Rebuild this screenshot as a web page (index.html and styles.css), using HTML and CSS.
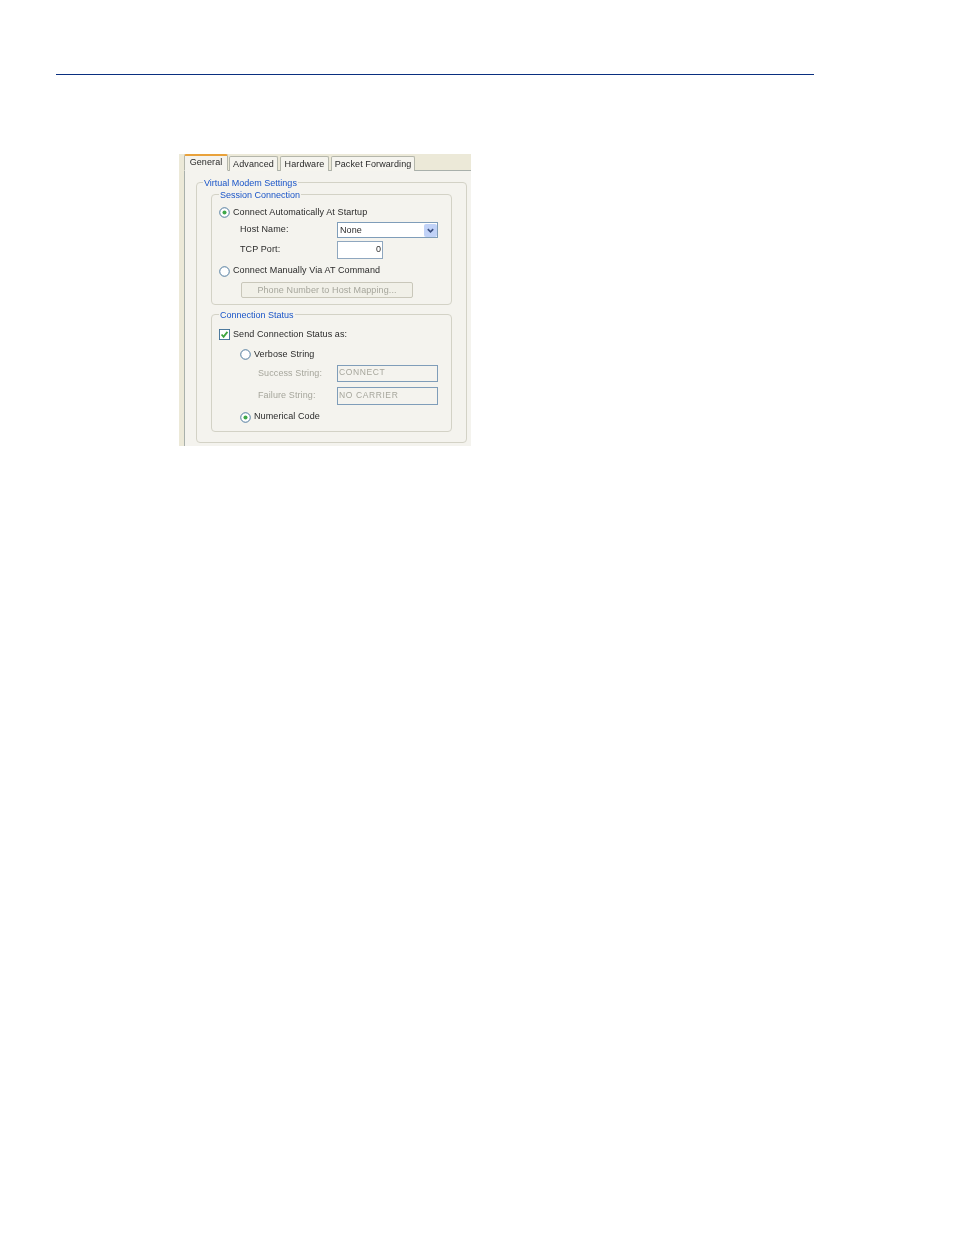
FILE: index.html
```html
<!DOCTYPE html>
<html lang="en">
<head>
  <meta charset="UTF-8">
  <title>Virtual Modem Settings</title>
  <link rel="stylesheet" href="styles.css">
</head>
<body>
  <div class="rule"></div>

  <div class="dialog">
    <div class="tabs">
      <div class="tab active">General</div>
      <div class="tab t-advanced">Advanced</div>
      <div class="tab t-hardware">Hardware</div>
      <div class="tab t-packet">Packet Forwarding</div>
    </div>

    <div class="panel">
      <div class="group outer">
        <span class="legend">Virtual Modem Settings</span>

        <div class="group session">
          <span class="legend">Session Connection</span>

          <div class="row r-auto">
            <svg class="radio" viewBox="0 0 12 12"><circle cx="6" cy="6" r="5.2" fill="#fff" stroke="#3f6f96"/><circle cx="6" cy="6" r="2.2" fill="#3fa84a"/></svg>
            <span>Connect Automatically At Startup</span>
          </div>
          <div class="row field r-host">
            <span class="field-label">Host Name:</span>
            <div class="select">
              <span>None</span>
              <div class="arrow">
                <svg viewBox="0 0 10 10" width="9" height="9"><path d="M2 3.5 L5 6.5 L8 3.5" fill="none" stroke="#3b4f80" stroke-width="1.8"/></svg>
              </div>
            </div>
          </div>
          <div class="row field r-tcp">
            <span class="field-label">TCP Port:</span>
            <div class="input port">0</div>
          </div>
          <div class="row r-manual">
            <svg class="radio" viewBox="0 0 12 12"><circle cx="6" cy="6" r="5.2" fill="#fff" stroke="#3f6f96"/></svg>
            <span>Connect Manually Via AT Command</span>
          </div>
          <div class="map-button">Phone Number to Host Mapping...</div>
        </div>

        <div class="group status">
          <span class="legend">Connection Status</span>

          <div class="row r-send">
            <svg class="radio" viewBox="0 0 12 12"><rect x="0.5" y="0.5" width="11" height="11" fill="#fff" stroke="#3f6f96"/><path d="M2.8 6 L5 8.5 L9.2 3.2" fill="none" stroke="#3fa53f" stroke-width="2"/></svg>
            <span>Send Connection Status as:</span>
          </div>
          <div class="row sub r-verbose">
            <svg class="radio" viewBox="0 0 12 12"><circle cx="6" cy="6" r="5.2" fill="#fff" stroke="#3f6f96"/></svg>
            <span>Verbose String</span>
          </div>
          <div class="row field off r-success">
            <span class="field-label">Success String:</span>
            <div class="input wide">CONNECT</div>
          </div>
          <div class="row field off r-failure">
            <span class="field-label">Failure String:</span>
            <div class="input wide">NO CARRIER</div>
          </div>
          <div class="row sub r-numeric">
            <svg class="radio" viewBox="0 0 12 12"><circle cx="6" cy="6" r="5.2" fill="#fff" stroke="#3f6f96"/><circle cx="6" cy="6" r="2.2" fill="#3fa84a"/></svg>
            <span>Numerical Code</span>
          </div>
        </div>
      </div>
    </div>
  </div>
</body>
</html>
```

FILE: styles.css
```css
body {
  margin: 0;
  padding: 74px 0 0 56px;
  background: #fff;
  color: #2a2a2a;
  font-family: "Liberation Sans", Arial, sans-serif;
  font-size: 9px;
  letter-spacing: 0.1px;
}
.rule {
  width: 758px;
  height: 1px;
  background: #0a2f80;
}

.dialog {
  width: 292px;
  height: 292px;
  margin: 79px 0 0 123px;
  background: #ece9d8;
  display: flex;
  flex-direction: column;
  filter: blur(0.3px);
}

/* tabs */
.tabs {
  display: flex;
  align-items: flex-end;
  box-sizing: border-box;
  height: 17px;
  margin-left: 5px;
  border-bottom: 1px solid #a9b0ab;
}
.tab {
  height: 15px;
  margin-bottom: -1px;
  line-height: 15px;
  text-align: center;
  background: #f5f4ee;
  border: 1px solid #b4b6ab;
  border-bottom: none;
  border-radius: 2px 2px 0 0;
  box-sizing: border-box;
  margin-right: 2px;
}
.tab.active {
  width: 44px;
  height: 17px;
  margin-right: 1px;
  line-height: 13px;
  border-top: 2px solid #e9a23b;
  background: #f4f3ee;
  border-bottom: 1px solid #f4f3ee;
}
.t-advanced { width: 49px; }
.t-hardware { width: 49px; }
.t-packet { width: 84px; }

.panel {
  flex: 1;
  margin-left: 5px;
  padding: 11px 4px 0 11px;
  background: #f4f3ee;
  border-left: 1px solid #a9b0ab;
  box-sizing: border-box;
}

/* group boxes */
.group {
  position: relative;
  border: 1px solid #d3d2c6;
  border-radius: 4px;
  box-sizing: border-box;
}
.legend {
  position: absolute;
  top: -6px;
  padding: 0 1px;
  background: #f4f3ee;
  color: #1a55c8;
  line-height: 12px;
  letter-spacing: 0;
}
.outer {
  height: 261px;
  padding: 11px 14px 0 14px;
}
.outer > .legend { left: 6px; }
.session { height: 111px; padding-top: 9px; }
.status {
  height: 118px;
  margin-top: 9px;
  padding-top: 11px;
}
.session > .legend, .status > .legend { left: 7px; }

/* rows */
.row {
  display: flex;
  align-items: center;
  height: 16px;
  padding-left: 7px;
}
.row > span { position: relative; top: -1px; }
.r-auto > span, .r-send > span, .r-verbose > span { top: 0; }
.radio {
  width: 11px;
  height: 11px;
  margin-right: 3px;
  flex: none;
}
.sub { padding-left: 28px; }
.field { padding-left: 28px; }
.field-label { width: 97px; flex: none; }
.r-host { margin-top: 2px; }
.r-tcp { margin-top: 3px; height: 18px; }
.r-manual { margin-top: 4px; }
.r-verbose { margin-top: 4px; }
.r-success { margin-top: 3px; height: 17px; padding-left: 46px; }
.r-failure { margin-top: 5px; height: 18px; padding-left: 46px; }
.r-numeric { margin-top: 4px; }
.off { color: #a6a69c; }
.off .field-label { width: 79px; }

/* controls */
.select, .input {
  box-sizing: border-box;
  height: 100%;
  background: #fff;
  border: 1px solid #7f9db9;
}
.select {
  width: 101px;
  display: flex;
  justify-content: space-between;
  align-items: center;
  padding-left: 2px;
}
.arrow {
  width: 13px;
  height: 13px;
  display: flex;
  align-items: center;
  justify-content: center;
  background: #c1d2f7;
  border-radius: 2px;
}
.input {
  display: flex;
  align-items: center;
  padding-bottom: 2px;
}
.port {
  width: 46px;
  justify-content: flex-end;
  padding-right: 1px;
  border-color: #8fa7bf;
}
.wide {
  width: 101px;
  padding-left: 1px;
  padding-bottom: 3px;
  background: #f4f3ee;
  letter-spacing: 0.6px;
  font-size: 8.5px;
}
.map-button {
  width: 172px;
  height: 16px;
  margin: 3px 0 0 29px;
  line-height: 14px;
  text-align: center;
  color: #a6a69c;
  background: #f1f0e8;
  border: 1px solid #c9c7ba;
  border-radius: 2px;
  box-sizing: border-box;
}
```
